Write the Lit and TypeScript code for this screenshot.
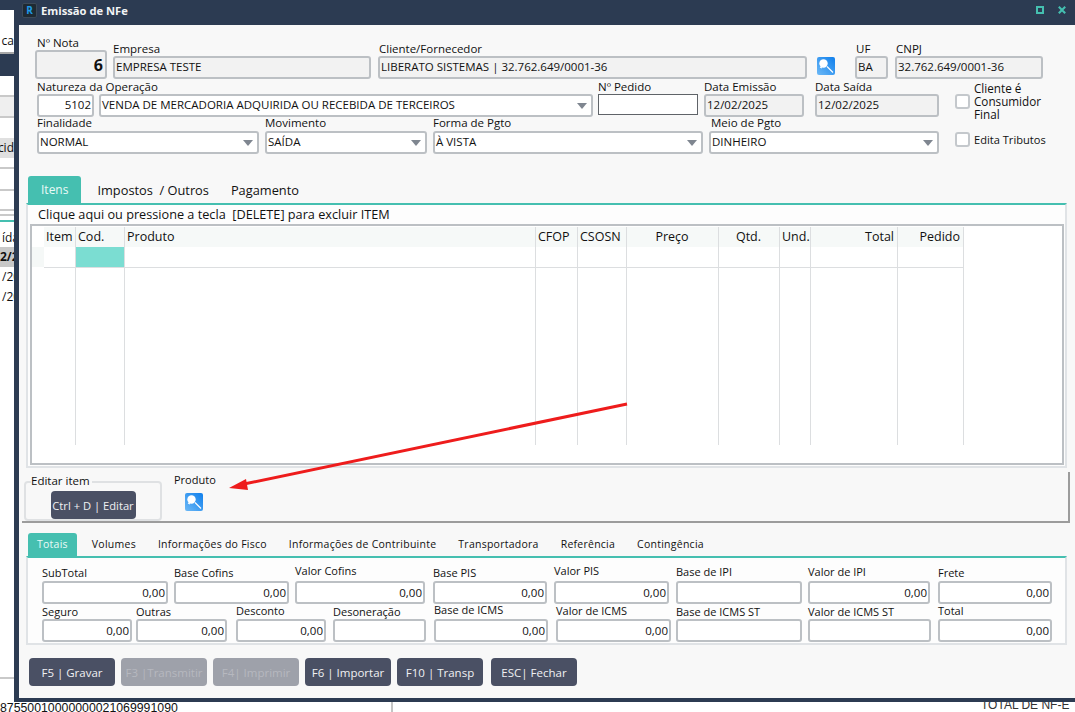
import { LitElement, html, css, svg } from "lit";
import { customElement } from "lit/decorators.js";

interface F { l: string; w: number; g?: number; v?: string; k?: string; lx?: number; up?: number; }

const row1: F[] = [
  { l: "Nº Nota", w: 72, v: "6", k: "ro big", lx: 2 },
  { l: "Empresa", w: 258, g: 6, v: "EMPRESA TESTE", k: "ro" },
  { l: "Cliente/Fornecedor", w: 429, g: 7, v: "LIBERATO SISTEMAS | 32.762.649/0001-36", k: "ro", lx: 1 },
];
const row1b: F[] = [
  { l: "UF", w: 33, g: 20, v: "BA", k: "ro", lx: 1 },
  { l: "CNPJ", w: 148, g: 7, v: "32.762.649/0001-36", k: "ro", lx: 1 },
];
const row2: F[] = [
  { l: "Natureza da Operação", w: 57, v: "5102", k: "num" },
  { l: "", w: 494, g: 5, v: "VENDA DE MERCADORIA ADQUIRIDA OU RECEBIDA DE TERCEIROS", k: "combo" },
  { l: "Nº Pedido", w: 100, g: 5, k: "plain" },
  { l: "Data Emissão", w: 100, g: 6, v: "12/02/2025", k: "ro" },
  { l: "Data Saída", w: 124, g: 11, v: "12/02/2025", k: "ro" },
];
const row3: F[] = [
  { l: "Finalidade", w: 222, v: "NORMAL", k: "combo" },
  { l: "Movimento", w: 162, g: 6, v: "SAÍDA", k: "combo" },
  { l: "Forma de Pgto", w: 270, g: 6, v: "À VISTA", k: "combo" },
  { l: "Meio de Pgto", w: 230, g: 6, v: "DINHEIRO", k: "combo", lx: 2 },
];
const tot1: F[] = [
  { l: "SubTotal", w: 126, v: "0,00", k: "num", up: 1 },
  { l: "Base Cofins", w: 115, g: 6, v: "0,00", k: "num", up: 1 },
  { l: "Valor Cofins", w: 130, g: 6, v: "0,00", k: "num", up: 3 },
  { l: "Base PIS", w: 114, g: 8, v: "0,00", k: "num", up: 1 },
  { l: "Valor PIS", w: 115, g: 7, v: "0,00", k: "num", up: 3 },
  { l: "Base de IPI", w: 126, g: 7, k: "num", up: 2 },
  { l: "Valor de IPI", w: 122, g: 6, v: "0,00", k: "num", up: 2 },
  { l: "Frete", w: 114, g: 8, v: "0,00", k: "num", up: 1 },
];
const tot2: F[] = [
  { l: "Seguro", w: 90, v: "0,00", k: "num" },
  { l: "Outras", w: 91, g: 4, v: "0,00", k: "num" },
  { l: "Desconto", w: 90, g: 9, v: "0,00", k: "num", up: 1 },
  { l: "Desoneração", w: 93, g: 7, k: "num" },
  { l: "Base de ICMS", w: 114, g: 8, v: "0,00", k: "num", up: 2 },
  { l: "Valor de ICMS", w: 115, g: 8, v: "0,00", k: "num", up: 1 },
  { l: "Base de ICMS ST", w: 126, g: 5, k: "num" },
  { l: "Valor de ICMS ST", w: 123, g: 6, k: "num" },
  { l: "Total", w: 114, g: 7, v: "0,00", k: "num", up: 1 },
];
const cols = [
  { t: "Item", w: 32, a: "left" },
  { t: "Cod.", w: 49, a: "left", on: true },
  { t: "Produto", w: 411, a: "left" },
  { t: "CFOP", w: 42, a: "left" },
  { t: "CSOSN", w: 49, a: "left" },
  { t: "Preço", w: 92, a: "center" },
  { t: "Qtd.", w: 61, a: "center" },
  { t: "Und.", w: 31, a: "left" },
  { t: "Total", w: 87, a: "right" },
  { t: "Pedido", w: 66, a: "right" },
];
const bands = [
  { h: 10, c: "dk" }, { h: 20, c: "" }, { h: 22, c: "", t: "ca" }, { h: 2, c: "gr" }, { h: 22, c: "dk" }, { h: 19, c: "" },
  { h: 23, c: "soft" }, { h: 20, c: "" }, { h: 20, c: "lite", t: "cid" }, { h: 9, c: "" }, { h: 2, c: "line" },
  { h: 20, c: "" }, { h: 2, c: "line" }, { h: 18, c: "" }, { h: 2, c: "line" }, { h: 3, c: "" }, { h: 2, c: "line" },
  { h: 4, c: "" }, { h: 2, c: "teal" }, { h: 6, c: "" }, { h: 19, c: "st", t: "ída" }, { h: 20, c: "sel st", t: "2/2" },
  { h: 20, c: "st", t: "/20" }, { h: 20, c: "st", t: "/20" }, { h: 370, c: "" }, { h: 2, c: "line" },
];

const glass = svg`<defs><linearGradient id="g" x1="0" y1="1" x2="1" y2="0"><stop offset="0" stop-color="#6db9f6"/><stop offset="1" stop-color="#0f7fec"/></linearGradient></defs>
<rect width="18" height="18" rx="2" fill="url(#g)"/><circle cx="6.5" cy="6.5" r="4.2" fill="#fff"/><path d="M3 10l2 1M10 9.5l6 6" stroke="#fff" stroke-width="1.1" fill="none"/>`;

@customElement("app-root")
export class AppRoot extends LitElement {
  static styles = css`
    :host { display: block; position: relative; width: 1075px; height: 712px; overflow: hidden; background: #fff;
      font-family: "Open Sans", "Noto Sans", sans-serif; font-size: 12px; color: #111; }
    .strip { width: 14px; display: flex; flex-direction: column; overflow: hidden; }
    .band { flex: none; font-size: 12px; line-height: 1; display: flex; align-items: center; justify-content: flex-end; white-space: nowrap; overflow: hidden; }
    .band.st { justify-content: flex-start; padding-left: 2px; }
    .band.dk { background: #2c3b52; } .band.gr { background: #a8a8a8; } .band.line { background: #c9c9c9; }
    .band.soft { background: #efefef; border-top: 2px solid #c9c9c9; border-bottom: 2px solid #c9c9c9; box-sizing: border-box; }
    .band.lite { background: #e0e0e0; } .band.teal { background: #45bfb0; }
    .band.sel { background: #c8c8c8; font-weight: 700; padding-left: 0; }
    .below { position: absolute; left: 0; right: 0; top: 702px; height: 10px; overflow: hidden; }
    .key { position: absolute; left: 0; top: -1px; font-family: "Liberation Sans", sans-serif; font-size: 12.3px; line-height: 15px; }
    .vline { position: absolute; left: 391px; top: 0; width: 2px; height: 10px; background: #c4c4c4; }
    .totnfe { position: absolute; left: 981px; top: -4px; font-family: "Liberation Sans", sans-serif; font-size: 12px; line-height: 15px; color: #333; }
    .win { position: absolute; left: 14px; top: 0; width: 1061px; height: 702px; display: flex; flex-direction: column; }
    .title { flex: none; box-sizing: border-box; height: 25px; padding-bottom: 5px; background: #2c3b52; display: flex; align-items: center; color: #f2f4f6; font-weight: 700; font-size: 11.2px; }
    .logo { width: 15px; height: 15px; margin: 0 4px 0 8px; border-radius: 2px; background: #1f2a33; color: #1e9be8; border: 1px solid #3d4a58; box-sizing: border-box;
      font-size: 10px; display: flex; align-items: center; justify-content: center; }
    .title .sp { flex: 1; }
    .wbtn { width: 8px; height: 8px; border: 2px solid #45bfb0; box-sizing: border-box; margin-right: 14px; }
    .wx { width: 8px; height: 8px; margin-right: 9px; display: block; }
    .body { flex: 1; min-height: 0; background: #f8f8f8; border-left: 5px solid #2c3b52; border-bottom: 4px solid #2c3b52; display: flex; flex-direction: column; position: relative; }
    .row { display: flex; padding-left: 16px; flex: none; }
    .r1 { height: 54px; align-items: flex-end; }
    .r2 { height: 38px; padding-left: 18px; }
    .r3 { height: 37px; padding-left: 18px; --lh: 14px; }
    .fld { display: flex; flex-direction: column; flex: none; }
    .lbl { height: var(--lh, 15px); line-height: var(--lh, 15px); font-size: 11.5px; white-space: nowrap; }
    .r3 .lbl { line-height: 12px; }
    .in { box-sizing: border-box; height: 23px; border: 2px solid #bcc0c4; border-radius: 3px; background: #fff; line-height: 19px; padding: 0 1px; font-size: 11.5px; white-space: nowrap; overflow: hidden; position: relative; }
    .row .in { line-height: 17px; }
    .in.ro { background: #f2f2f2; }
    .row .in.big { height: 29px; text-align: right; font-weight: 700; font-size: 16px; line-height: 26px; padding-right: 2px; }
    .in.num { text-align: right; }
    .in.plain { height: 21px; border: 1px solid #5f6368; border-radius: 0; }
    .in.combo::after { content: ""; position: absolute; right: 4px; top: 7px; border-left: 5.5px solid transparent; border-right: 5.5px solid transparent; border-top: 6px solid #7f8690; }
    .icon { width: 18px; height: 18px; display: block; flex: none; }
    .ibox { flex: none; margin: 0 0 4px 10px; }
    .chk { box-sizing: border-box; width: 15px; height: 15px; border: 2px solid #c4c8cc; border-radius: 3px; background: #fff; flex: none; }
    .cw { display: flex; gap: 4px; margin-left: 16px; font-size: 11.7px; line-height: 13px; flex: none; align-items: center; }
    .cw.a { height: 15px; align-items: flex-start; }
    .cw.a .chk { margin-top: 15px; }
    .cw.a .txt { margin-top: 3px; }
    .cw.b { margin-top: 15px; height: 15px; font-size: 11.1px; }
    .tabs { display: flex; flex: none; margin-left: 9px; height: 27px; align-items: stretch; }
    .tab { display: flex; align-items: center; padding: 0 13px; font-size: 12.8px; white-space: nowrap; }
    .tab.on { background: #45bfb0; color: #eafaf7; border-radius: 3px 3px 0 0; font-size: 12px; }
    .tab.imp { padding: 0 22px 0 16px; }
    .tab.pag { padding-left: 0; }
    .t1 { margin-top: 22px; }
    .sheet { flex: none; margin-left: 7px; width: 1041px; box-sizing: border-box; border-top: 2px solid #45bfb0; border-left: 2px solid #e0e3e6; border-right: 2px solid #e0e3e6; border-bottom: 2px solid #e0e3e6; background: #fdfdfd; }
    .s1 { height: 265px; display: flex; flex-direction: column; }
    .hint { flex: none; height: 19px; line-height: 19px; padding-left: 10px; font-size: 12.7px; white-space: nowrap; }
    .grid { flex: 1; margin: 0 1px 1px 2px; box-sizing: border-box; border: 2px solid #bcc0c4; background: #fff; padding-top: 1px; display: flex; min-height: 0; }
    .gut { flex: none; width: 12px; height: 20px; margin-top: 20px; background: #f5f8f7; }
    .col { flex: none; box-sizing: border-box; border-right: 1px solid #dcdee0; height: 218px; }
    .hd { height: 20px; line-height: 20px; background: #f6f9f8; padding: 0 3px 0 2px; font-size: 12.5px; white-space: nowrap; }
    .cell { height: 20px; border-bottom: 1px solid #dcdee0; }
    .cell.on { background: #7bddd2; }
    .edit { flex: none; margin: 4px 0 0 3px; width: 1048px; height: 51px; box-sizing: border-box; border-right: 2px solid #9c9c9c; border-bottom: 2px solid #9c9c9c; display: flex; }
    .group { box-sizing: border-box; position: relative; margin: 9px 0 0 2px; width: 138px; height: 40px; border: 2px solid #dfe1e3; border-radius: 4px; display: flex; justify-content: center; }
    .legend { position: absolute; left: 5px; top: -9px; background: #f8f8f8; padding: 0 2px 0 0; font-size: 11.5px; line-height: 14px; }
    .btn { box-sizing: border-box; border-radius: 4px; background: #4a5064; color: #f0f1f3; height: 28px; width: 86px; display: flex; align-items: center; justify-content: center; font-size: 11.5px; white-space: nowrap; flex: none; }
    .btn.off { background: #9ea1aa; color: #b6b8bf; }
    .btn.esc { margin-left: 2px; }
    .group .btn { width: 85px; margin-top: 8px; font-size: 11.2px; }
    .prod { margin: 1px 0 0 12px; display: flex; flex-direction: column; font-size: 11px; line-height: 13px; }
    .prod .icon { margin: 7px 0 0 11px; }
    .t2 { margin-top: 10px; height: 23px; }
    .t2 .tab { font-size: 10.5px; padding: 0 8px 2px; letter-spacing: .25px; margin: 0 3px; }
    .t2 .tab.on { font-size: 10.5px; padding: 0 9px 2px; margin: 0 4px 0 0; }
    .s2 { height: 89px; padding-left: 14px; }
    .tr1 { display: flex; align-items: flex-end; height: 46px; }
    .tr2 { display: flex; align-items: flex-end; height: 38px; }
    .s2 .lbl { height: 14px; line-height: 14px; font-size: 11px; }
    .bar { display: flex; gap: 6px; margin: 13px 0 0 10px; flex: none; }
    .arrow { position: absolute; left: 0; top: 0; width: 1075px; height: 712px; pointer-events: none; }
  `;

  private fld(f: F) {
    return html`<div class="fld" style="width:${f.w}px;margin-left:${f.g ?? 0}px">
      <span class="lbl" style="padding-left:${f.lx ?? 0}px;margin-bottom:${f.up ?? 0}px">${f.l}</span>
      <div class="in ${f.k ?? ""}">${f.v ?? ""}</div>
    </div>`;
  }

  render() {
    return html`
      <div class="strip">
        ${bands.map((b) => html`<div class="band ${b.c}" style="height:${b.h}px">${b.t ?? ""}</div>`)}
      </div>
      <div class="below">
        <span class="key">87550010000000021069991090</span>
        <span class="vline"></span>
        <span class="totnfe">TOTAL DE NF-E</span>
      </div>
      <div class="win">
        <div class="title">
          <span class="logo">R</span>Emissão de NFe<span class="sp"></span>
          <span class="wbtn"></span>
          <svg class="wx" viewBox="0 0 10 10"><path d="M1 1l8 8M9 1l-8 8" stroke="#45bfb0" stroke-width="2.6"/></svg>
        </div>
        <div class="body">
          <div class="row r1">
            ${row1.map((f) => this.fld(f))}
            <svg class="icon ibox" viewBox="0 0 18 18">${glass}</svg>
            ${row1b.map((f) => this.fld(f))}
          </div>
          <div class="row r2">
            ${row2.map((f) => this.fld(f))}
            <div class="cw a"><span class="chk"></span><span class="txt">Cliente é<br />Consumidor<br />Final</span></div>
          </div>
          <div class="row r3">
            ${row3.map((f) => this.fld(f))}
            <div class="cw b"><span class="chk"></span><span>Edita Tributos</span></div>
          </div>
          <div class="tabs t1">
            <div class="tab on">Itens</div><div class="tab imp">Impostos &nbsp;/ Outros</div><div class="tab pag">Pagamento</div>
          </div>
          <div class="sheet s1">
            <div class="hint">Clique aqui ou pressione a tecla &nbsp;[DELETE] para excluir ITEM</div>
            <div class="grid">
              <div class="gut"></div>
              ${cols.map((c) => html`<div class="col" style="width:${c.w}px">
                <div class="hd" style="text-align:${c.a}">${c.t}</div>
                <div class="cell ${c.on ? "on" : ""}"></div>
              </div>`)}
            </div>
          </div>
          <div class="edit">
            <div class="group">
              <span class="legend">Editar item</span>
              <div class="btn">Ctrl + D | Editar</div>
            </div>
            <div class="prod"><span>Produto</span><svg class="icon" viewBox="0 0 18 18">${glass}</svg></div>
          </div>
          <div class="tabs t2">
            ${["Totais", "Volumes", "Informações do Fisco", "Informações de Contribuinte", "Transportadora", "Referência", "Contingência"].map(
              (t, i) => html`<div class="tab ${i === 0 ? "on" : ""}">${t}</div>`
            )}
          </div>
          <div class="sheet s2">
            <div class="tr1">${tot1.map((f) => this.fld(f))}</div>
            <div class="tr2">${tot2.map((f) => this.fld(f))}</div>
          </div>
          <div class="bar">
            <div class="btn">F5 | Gravar</div>
            <div class="btn off">F3 |Transmitir</div>
            <div class="btn off">F4| Imprimir</div>
            <div class="btn">F6 | Importar</div>
            <div class="btn">F10 | Transp</div>
            <div class="btn esc">ESC| Fechar</div>
          </div>
        </div>
      </div>
      <svg class="arrow" viewBox="0 0 1075 712">
        <path d="M627 404L244 484" stroke="#ee1c1c" stroke-width="3" fill="none"/>
        <path d="M229 488L246 479L248 490Z" fill="#ee1c1c"/>
      </svg>
    `;
  }
}
